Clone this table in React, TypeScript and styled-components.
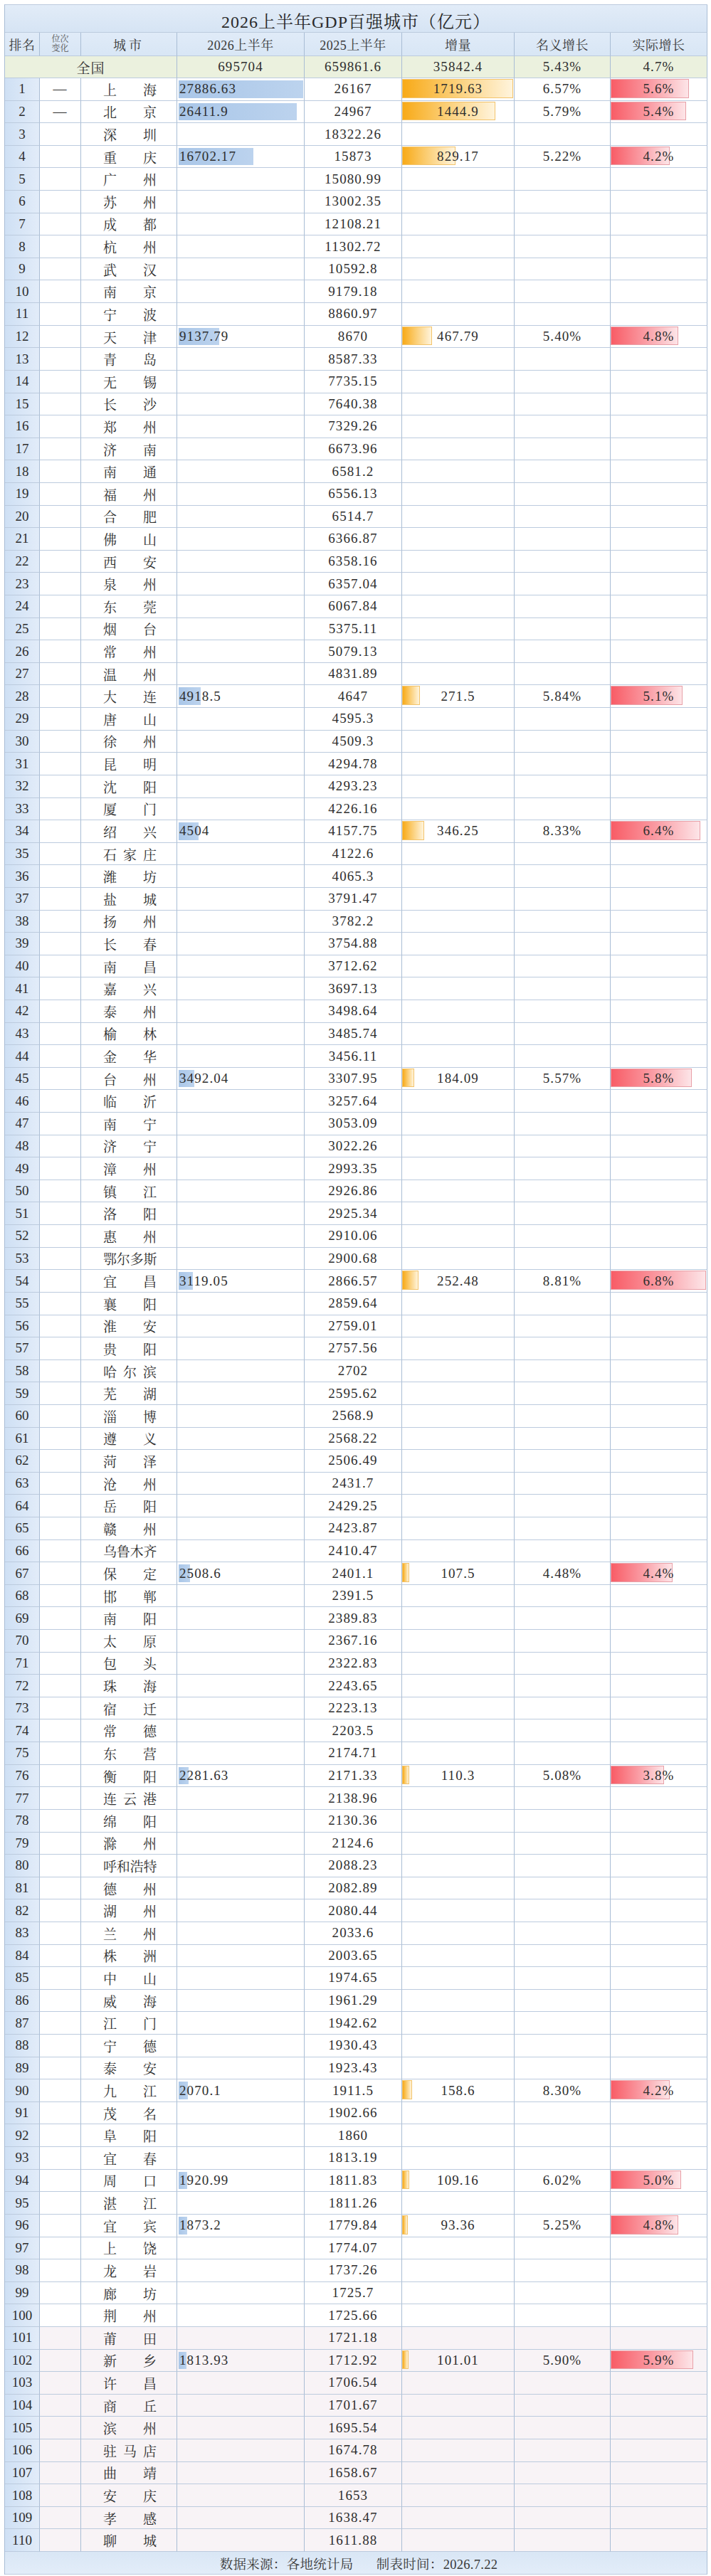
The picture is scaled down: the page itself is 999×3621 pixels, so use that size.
import React from 'react';
import styled, { createGlobalStyle } from 'styled-components';

const GlobalStyle = createGlobalStyle`
  html, body {
    margin: 0;
    padding: 0;
    background: #ffffff;
  }
  body {
    font-family: "Liberation Serif", "Noto Serif CJK SC", "Noto Sans CJK SC", serif;
    color: #2e2e2e;
  }
  * {
    box-sizing: border-box;
  }
`;

const COLS = '49px 58px 135px 179px 137px 158px 135px 136px';
const LINE_H = '#bccbde';
const LINE_V = '#a9bdd5';

const MAX_GDP = 27886.63;
const MAX_INC = 1719.63;
const MAX_REAL = 6.8;

type City = {
  name: string;
  gdp?: number;
  prev: string;
  inc?: string;
  nominal?: string;
  real?: string;
  change?: string;
};

const c = (
  name: string,
  prev: string,
  gdp?: number,
  inc?: string,
  nominal?: string,
  real?: string,
  change?: string,
): City => ({ name, prev, gdp, inc, nominal, real, change });

const cities: City[] = [
  c('上海', '26167', 27886.63, '1719.63', '6.57%', '5.6%', '—'),
  c('北京', '24967', 26411.9, '1444.9', '5.79%', '5.4%', '—'),
  c('深圳', '18322.26'),
  c('重庆', '15873', 16702.17, '829.17', '5.22%', '4.2%'),
  c('广州', '15080.99'),
  c('苏州', '13002.35'),
  c('成都', '12108.21'),
  c('杭州', '11302.72'),
  c('武汉', '10592.8'),
  c('南京', '9179.18'),
  c('宁波', '8860.97'),
  c('天津', '8670', 9137.79, '467.79', '5.40%', '4.8%'),
  c('青岛', '8587.33'),
  c('无锡', '7735.15'),
  c('长沙', '7640.38'),
  c('郑州', '7329.26'),
  c('济南', '6673.96'),
  c('南通', '6581.2'),
  c('福州', '6556.13'),
  c('合肥', '6514.7'),
  c('佛山', '6366.87'),
  c('西安', '6358.16'),
  c('泉州', '6357.04'),
  c('东莞', '6067.84'),
  c('烟台', '5375.11'),
  c('常州', '5079.13'),
  c('温州', '4831.89'),
  c('大连', '4647', 4918.5, '271.5', '5.84%', '5.1%'),
  c('唐山', '4595.3'),
  c('徐州', '4509.3'),
  c('昆明', '4294.78'),
  c('沈阳', '4293.23'),
  c('厦门', '4226.16'),
  c('绍兴', '4157.75', 4504, '346.25', '8.33%', '6.4%'),
  c('石家庄', '4122.6'),
  c('潍坊', '4065.3'),
  c('盐城', '3791.47'),
  c('扬州', '3782.2'),
  c('长春', '3754.88'),
  c('南昌', '3712.62'),
  c('嘉兴', '3697.13'),
  c('泰州', '3498.64'),
  c('榆林', '3485.74'),
  c('金华', '3456.11'),
  c('台州', '3307.95', 3492.04, '184.09', '5.57%', '5.8%'),
  c('临沂', '3257.64'),
  c('南宁', '3053.09'),
  c('济宁', '3022.26'),
  c('漳州', '2993.35'),
  c('镇江', '2926.86'),
  c('洛阳', '2925.34'),
  c('惠州', '2910.06'),
  c('鄂尔多斯', '2900.68'),
  c('宜昌', '2866.57', 3119.05, '252.48', '8.81%', '6.8%'),
  c('襄阳', '2859.64'),
  c('淮安', '2759.01'),
  c('贵阳', '2757.56'),
  c('哈尔滨', '2702'),
  c('芜湖', '2595.62'),
  c('淄博', '2568.9'),
  c('遵义', '2568.22'),
  c('菏泽', '2506.49'),
  c('沧州', '2431.7'),
  c('岳阳', '2429.25'),
  c('赣州', '2423.87'),
  c('乌鲁木齐', '2410.47'),
  c('保定', '2401.1', 2508.6, '107.5', '4.48%', '4.4%'),
  c('邯郸', '2391.5'),
  c('南阳', '2389.83'),
  c('太原', '2367.16'),
  c('包头', '2322.83'),
  c('珠海', '2243.65'),
  c('宿迁', '2223.13'),
  c('常德', '2203.5'),
  c('东营', '2174.71'),
  c('衡阳', '2171.33', 2281.63, '110.3', '5.08%', '3.8%'),
  c('连云港', '2138.96'),
  c('绵阳', '2130.36'),
  c('滁州', '2124.6'),
  c('呼和浩特', '2088.23'),
  c('德州', '2082.89'),
  c('湖州', '2080.44'),
  c('兰州', '2033.6'),
  c('株洲', '2003.65'),
  c('中山', '1974.65'),
  c('威海', '1961.29'),
  c('江门', '1942.62'),
  c('宁德', '1930.43'),
  c('泰安', '1923.43'),
  c('九江', '1911.5', 2070.1, '158.6', '8.30%', '4.2%'),
  c('茂名', '1902.66'),
  c('阜阳', '1860'),
  c('宜春', '1813.19'),
  c('周口', '1811.83', 1920.99, '109.16', '6.02%', '5.0%'),
  c('湛江', '1811.26'),
  c('宜宾', '1779.84', 1873.2, '93.36', '5.25%', '4.8%'),
  c('上饶', '1774.07'),
  c('龙岩', '1737.26'),
  c('廊坊', '1725.7'),
  c('荆州', '1725.66'),
  c('莆田', '1721.18'),
  c('新乡', '1712.92', 1813.93, '101.01', '5.90%', '5.9%'),
  c('许昌', '1706.54'),
  c('商丘', '1701.67'),
  c('滨州', '1695.54'),
  c('驻马店', '1674.78'),
  c('曲靖', '1658.67'),
  c('安庆', '1653'),
  c('孝感', '1638.47'),
  c('聊城', '1611.88'),
];

const Page = styled.div`
  padding: 6px 5px 3px 6px;
`;

const Table = styled.div`
  width: 988px;
  border-left: 1px solid ${LINE_V};
  border-top: 1px solid ${LINE_H};
`;

const TitleBar = styled.div`
  height: 39px;
  padding-top: 5px;
  display: flex;
  justify-content: center;
  align-items: center;
  font-size: 24px;
  letter-spacing: 1px;
  color: #2a2a2a;
  background: linear-gradient(180deg, #e2ecf8 0%, #d6e4f4 100%);
  border-right: 1px solid ${LINE_V};
  border-bottom: 1px solid ${LINE_H};
`;

const Row = styled.div<{ $kind?: 'head' | 'total' | 'tail' | 'body' }>`
  display: grid;
  grid-template-columns: ${COLS};
  height: ${({ $kind }) => ($kind === 'head' ? '33px' : $kind === 'total' ? '31px' : '31.61px')};
  background: ${({ $kind }) =>
    $kind === 'head'
      ? 'linear-gradient(180deg, #e0ebf8 0%, #d8e6f5 100%)'
      : $kind === 'total'
        ? '#ebf1de'
        : $kind === 'tail'
          ? '#f8f3f6'
          : '#ffffff'};
`;

const Cell = styled.div<{ $align?: 'left' | 'center'; $span?: number }>`
  position: relative;
  display: flex;
  align-items: center;
  justify-content: ${({ $align }) => ($align === 'left' ? 'flex-start' : 'center')};
  padding-left: ${({ $align }) => ($align === 'left' ? '3px' : '0')};
  grid-column: ${({ $span }) => ($span ? `span ${$span}` : 'auto')};
  border-right: 1px solid ${LINE_V};
  border-bottom: 1px solid ${LINE_H};
  font-size: 19px;
  letter-spacing: 1.1px;
  white-space: nowrap;
  overflow: hidden;
`;

const RankCell = styled(Cell)`
  letter-spacing: 0;
  background: linear-gradient(90deg, #cfe0f4 0%, #e2ecf9 100%);
`;

const HeadCell = styled(Cell)`
  font-size: 18px;
  letter-spacing: 0.5px;
  color: #383838;
`;

const SmallHead = styled.div`
  font-size: 12px;
  line-height: 13px;
  letter-spacing: 0;
  text-align: center;
  color: #555555;
`;

const CityName = styled.div<{ $wide?: boolean }>`
  width: 75px;
  margin-left: 3px;
  display: flex;
  justify-content: space-between;
  font-size: 19px;
  letter-spacing: ${({ $wide }) => ($wide ? '-0.5px' : '0')};
`;

const Value = styled.span`
  position: relative;
  z-index: 1;
`;

const GdpBar = styled.div`
  position: absolute;
  left: 2px;
  top: 3px;
  bottom: 3px;
  background: linear-gradient(90deg, #a9c6e8 0%, #bcd3ee 100%);
`;

const IncBar = styled.div`
  position: absolute;
  left: 0;
  top: 1px;
  bottom: 3px;
  border: 1px solid #f3c46c;
  background: linear-gradient(90deg, #f8aa18 0%, #fbcd72 45%, #fff4dc 100%);
`;

const RealBar = styled.div`
  position: absolute;
  left: 0;
  top: 1px;
  bottom: 3px;
  border: 1px solid #e8a0a8;
  background: linear-gradient(90deg, #f85c66 0%, #fa9aa2 50%, #fde5e8 100%);
`;

const Footer = styled.div`
  height: 32px;
  display: flex;
  justify-content: center;
  align-items: center;
  gap: 32px;
  padding-left: 8px;
  font-size: 18.5px;
  letter-spacing: 0.3px;
  color: #383838;
  background: linear-gradient(180deg, #d9e6f5 0%, #e3edf9 100%);
  border-right: 1px solid ${LINE_V};
  border-bottom: 1px solid ${LINE_H};
`;

const CityRow = ({ city, rank }: { city: City; rank: number }) => (
  <Row $kind={rank > 100 ? 'tail' : 'body'}>
    <RankCell>{rank}</RankCell>
    <Cell>{city.change ?? ''}</Cell>
    <Cell>
      <CityName $wide={city.name.length > 3}>
        {city.name.split('').map((ch, i) => (
          <span key={i}>{ch}</span>
        ))}
      </CityName>
    </Cell>
    <Cell $align="left">
      {city.gdp !== undefined && (
        <>
          <GdpBar style={{ width: `${(city.gdp / MAX_GDP) * 175}px` }} />
          <Value>{city.gdp}</Value>
        </>
      )}
    </Cell>
    <Cell>{city.prev}</Cell>
    <Cell>
      {city.inc && (
        <>
          <IncBar style={{ width: `${(parseFloat(city.inc) / MAX_INC) * 156}px` }} />
          <Value>{city.inc}</Value>
        </>
      )}
    </Cell>
    <Cell>{city.nominal ?? ''}</Cell>
    <Cell>
      {city.real && (
        <>
          <RealBar style={{ width: `${(parseFloat(city.real) / MAX_REAL) * 134}px` }} />
          <Value>{city.real}</Value>
        </>
      )}
    </Cell>
  </Row>
);

export default function App() {
  return (
    <Page>
      <GlobalStyle />
      <Table>
        <TitleBar>2026上半年GDP百强城市（亿元）</TitleBar>
        <Row $kind="head">
          <HeadCell>排名</HeadCell>
          <HeadCell>
            <SmallHead>
              位次
              <br />
              变化
            </SmallHead>
          </HeadCell>
          <HeadCell style={{ letterSpacing: '4px' }}>城市</HeadCell>
          <HeadCell>2026上半年</HeadCell>
          <HeadCell>2025上半年</HeadCell>
          <HeadCell>增量</HeadCell>
          <HeadCell>名义增长</HeadCell>
          <HeadCell>实际增长</HeadCell>
        </Row>
        <Row $kind="total">
          <Cell $span={3}>全国</Cell>
          <Cell>695704</Cell>
          <Cell>659861.6</Cell>
          <Cell>35842.4</Cell>
          <Cell>5.43%</Cell>
          <Cell>4.7%</Cell>
        </Row>
        {cities.map((city, i) => (
          <CityRow key={city.name} city={city} rank={i + 1} />
        ))}
        <Footer>
          <span>数据来源：各地统计局</span>
          <span>制表时间：2026.7.22</span>
        </Footer>
      </Table>
    </Page>
  );
}
